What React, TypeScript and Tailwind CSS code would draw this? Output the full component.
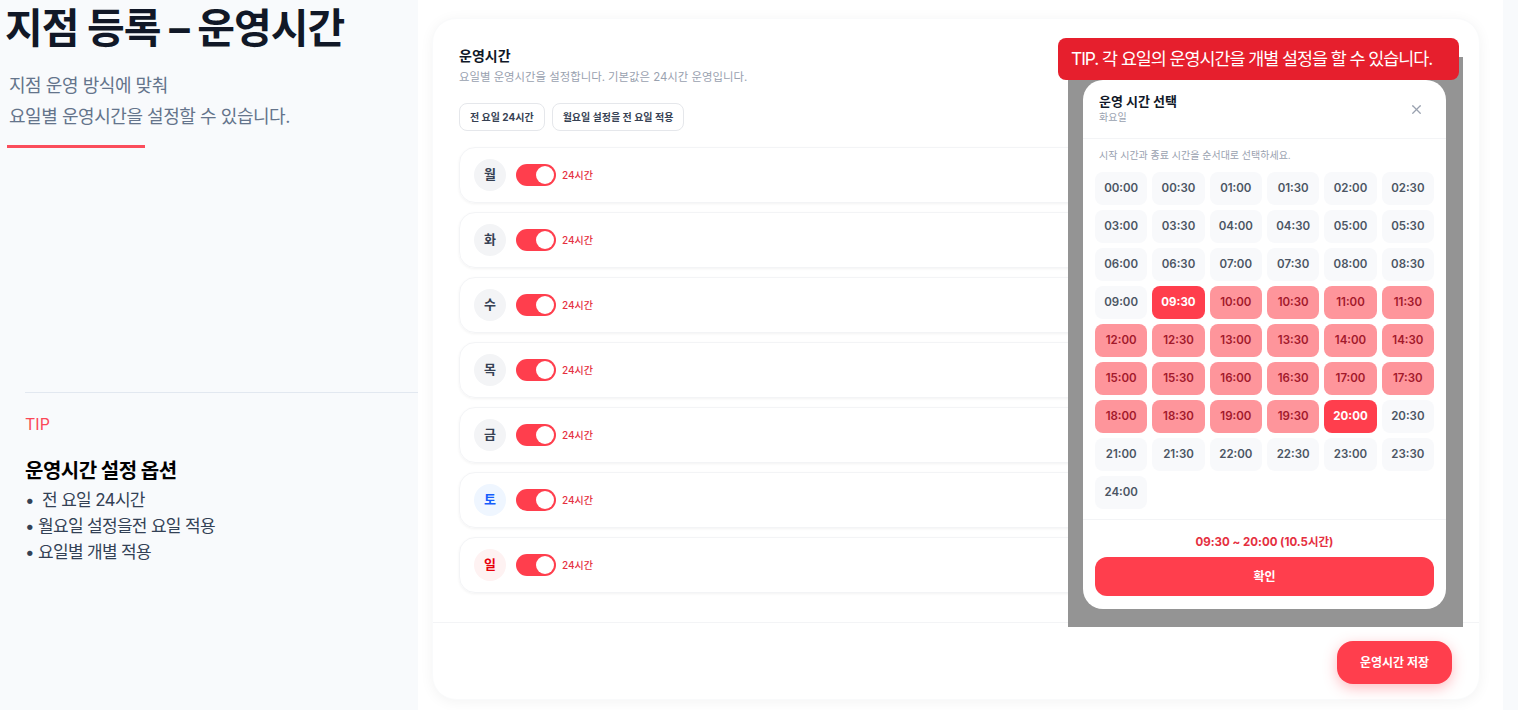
import { X } from "lucide-react";

const days = [
  { label: "월", tone: "bg-gray-100 text-gray-700" },
  { label: "화", tone: "bg-gray-100 text-gray-700" },
  { label: "수", tone: "bg-gray-100 text-gray-700" },
  { label: "목", tone: "bg-gray-100 text-gray-700" },
  { label: "금", tone: "bg-gray-100 text-gray-700" },
  { label: "토", tone: "bg-blue-50 text-blue-600" },
  { label: "일", tone: "bg-red-50 text-red-600" },
];

// 00:00 ~ 24:00, 30분 단위
const slots: string[] = [];
for (let m = 0; m <= 24 * 60; m += 30) {
  const h = String(Math.floor(m / 60)).padStart(2, "0");
  const mm = m % 60 === 0 ? "00" : "30";
  slots.push(`${h}:${mm}`);
}

const START = "09:30";
const END = "20:00";

const slotClass = (t: string) => {
  if (t === START || t === END) return "bg-[#ff3e4d] text-white font-bold";
  if (t > START && t < END) return "bg-[#fe959b] text-[#a3192b] font-semibold";
  return "bg-[#f8f9fb] text-[#4b5563] font-semibold";
};

const Toggle = () => (
  <div className="w-[40px] h-[22px] rounded-full bg-[#ff3e4d] flex items-center justify-end px-[2px]">
    <div className="w-[18px] h-[18px] rounded-full bg-white" />
  </div>
);

const TimeModal = () => (
  <div className="w-[363px] bg-white rounded-[20px] overflow-hidden">
    <div className="h-[59px] border-b border-gray-100 flex items-center justify-between pl-4 pr-[22px]">
      <div className="-mt-[2px]">
        <p className="text-[13px] leading-4 font-bold text-gray-900">운영 시간 선택</p>
        <p className="text-[10px] leading-[14px] mt-[1px] text-gray-400">화요일</p>
      </div>
      <X className="w-[15px] h-[15px] text-gray-400" strokeWidth={2} />
    </div>
    <div className="px-3 pt-[9px] pb-[10px]">
      <p className="px-1 text-[10px] leading-[14px] text-gray-400">
        시작 시간과 종료 시간을 순서대로 선택하세요.
      </p>
      <div className="mt-[10px] grid grid-cols-6 gap-[5px]">
        {slots.map((t) => (
          <div
            key={t}
            className={`h-[33px] rounded-lg flex items-center justify-center text-[11.5px] ${slotClass(t)}`}
          >
            {t}
          </div>
        ))}
      </div>
    </div>
    <div className="border-t border-gray-100 px-3 pt-[14px] pb-[13px]">
      <p className="text-center text-[11.5px] leading-4 font-bold text-[#e5303f]">
        09:30 ~ 20:00 (10.5시간)
      </p>
      <button className="mt-[7px] w-full h-[39px] rounded-xl bg-[#ff3e4d] text-white text-[12px] font-bold">
        확인
      </button>
    </div>
  </div>
);

export default function App() {
  return (
    <div
      className="h-screen flex bg-[#f8fafc] overflow-hidden"
      style={{ fontFamily: 'Inter, "Noto Sans CJK KR", sans-serif' }}
    >
      {/* 좌측 안내 영역 */}
      <aside className="w-[418px] shrink-0 flex flex-col">
        <h1 className="pl-[5px] mt-[2px] text-[41px] leading-[52px] font-bold tracking-tight text-[#111827]">
          지점 등록 – 운영시간
        </h1>
        <p className="pl-[9px] mt-4 text-[18px] leading-[31px] tracking-tight text-[#64748b]">
          지점 운영 방식에 맞춰
          <br />
          요일별 운영시간을 설정할 수 있습니다.
        </p>
        <div className="ml-[7px] mt-[13px] w-[138px] h-[3px] bg-[#fb4d5b]" />

        <div className="ml-[25px] mt-[244px] border-t border-[#e2e8f0] pt-[19px]">
          <p className="text-[16px] leading-6 text-[#fb4757]">TIP</p>
          <p className="mt-[21px] text-[20px] leading-7 font-bold tracking-tight text-black">
            운영시간 설정 옵션
          </p>
          <ul className="mt-[2px] text-[17px] leading-[26px] tracking-[-0.04em] text-[#334155]">
            <li>•&nbsp;&nbsp;전 요일 24시간</li>
            <li>• 월요일 설정을전 요일 적용</li>
            <li>• 요일별 개별 적용</li>
          </ul>
        </div>
      </aside>

      {/* 운영시간 설정 카드 */}
      <main className="w-[1085px] shrink-0 bg-white pl-[14px] pr-[23px] pt-[18px]">
        <section className="relative h-[682px] rounded-3xl bg-white border border-gray-50 shadow-[0_2px_14px_rgba(0,0,0,0.05)] flex flex-col">
          <div className="px-[26px] pt-[27px]">
            <h2 className="text-[14px] leading-5 font-bold text-gray-900">운영시간</h2>
            <p className="mt-[3px] text-[11.4px] leading-4 text-gray-400">
              요일별 운영시간을 설정합니다. 기본값은 24시간 운영입니다.
            </p>
            <div className="mt-[18px] flex gap-[7px]">
              <button className="h-[28px] px-[10px] rounded-lg border border-gray-200 text-[10px] font-bold text-gray-700">
                전 요일 24시간
              </button>
              <button className="h-[28px] px-[10px] rounded-lg border border-gray-200 text-[10px] font-bold text-gray-700">
                월요일 설정을 전 요일 적용
              </button>
            </div>
            <div className="mt-4 flex flex-col gap-[9px]">
              {days.map((d) => (
                <div
                  key={d.label}
                  className="h-[56px] rounded-2xl border border-gray-100 shadow-[0_1px_3px_rgba(0,0,0,0.05)] flex items-center pl-[14px]"
                >
                  <div
                    className={`w-[32px] h-[32px] rounded-full flex items-center justify-center text-[13px] font-bold ${d.tone}`}
                  >
                    {d.label}
                  </div>
                  <div className="ml-[10px]">
                    <Toggle />
                  </div>
                  <span className="ml-[6px] text-[10px] font-medium text-[#e5303f]">24시간</span>
                </div>
              ))}
            </div>
          </div>

          <div className="mt-auto border-t border-gray-100 flex justify-end pt-[18px] pb-[15px] pr-[27px]">
            <button className="w-[115px] h-[43px] rounded-2xl bg-[#ff3e4d] text-white text-[12px] font-bold shadow-[0_4px_14px_rgba(255,62,77,0.35)]">
              운영시간 저장
            </button>
          </div>

          {/* 시간 선택 모달 미리보기 */}
          <div className="absolute left-[635px] top-[38px] w-[395px] h-[570px] bg-[#949494] pl-[15px] pt-[23px]">
            <TimeModal />
          </div>
          <div className="absolute left-[625px] top-[19px] h-[42px] rounded-lg bg-[#e61f2d] flex items-center pl-[13px] pr-[27px] text-white text-[17.4px] tracking-[-0.06em]">
            TIP. 각 요일의 운영시간을 개별 설정을 할 수 있습니다.
          </div>
        </section>
      </main>
    </div>
  );
}
